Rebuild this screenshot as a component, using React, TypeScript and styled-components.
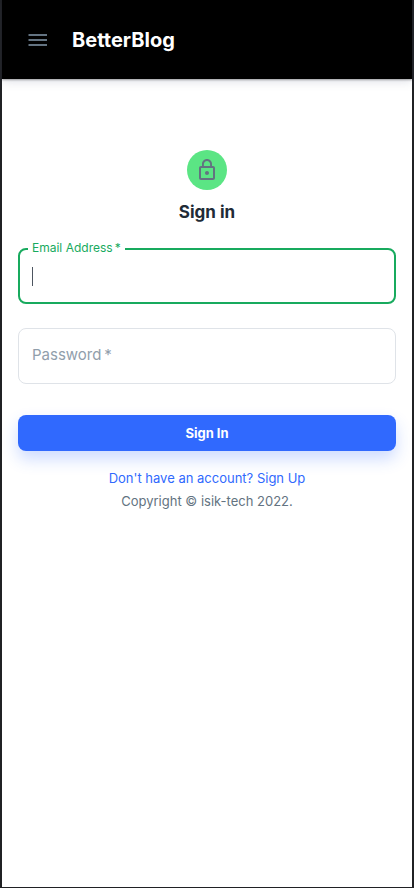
import React, { useState } from "react";
import styled, { createGlobalStyle } from "styled-components";

const GlobalStyle = createGlobalStyle`
  *, *::before, *::after { box-sizing: border-box; }
  body {
    margin: 0;
    background: #202124;
    font-family: Inter, "Open Sans", sans-serif;
    color: #212b36;
  }
`;

const Page = styled.div`
  min-height: 100vh;
  display: flex;
  flex-direction: column;
  background: #ffffff;
  border: solid #202124;
  border-width: 0 2px 1px;
`;

const Header = styled.header`
  display: flex;
  align-items: center;
  gap: 22px;
  height: 79px;
  padding: 0 24px;
  background: #000000;
  box-shadow: 0 1px 2px rgba(0, 0, 0, 0.35), 0 2px 10px rgba(80, 90, 130, 0.2);
`;

const MenuButton = styled.button`
  display: flex;
  padding: 0;
  border: 0;
  background: none;
  color: #637381;
  cursor: pointer;
`;

const Brand = styled.span`
  font-size: 20px;
  line-height: 30px;
  font-weight: 700;
  color: #ffffff;
`;

const Main = styled.main`
  display: flex;
  flex-direction: column;
  align-items: center;
  width: 100%;
  max-width: 444px;
  margin: 0 auto;
  padding: 71px 16px 0;
`;

const Avatar = styled.div`
  display: flex;
  align-items: center;
  justify-content: center;
  width: 40px;
  height: 40px;
  border-radius: 50%;
  background: #5be584;
  color: #637381;
`;

const Title = styled.h1`
  margin: 8px 0 0;
  font-size: 17px;
  line-height: 28px;
  font-weight: 700;
`;

const Form = styled.form`
  display: flex;
  flex-direction: column;
  gap: 24px;
  width: 100%;
  margin-top: 22px;
`;

const Field = styled.div<{ $active?: boolean }>`
  position: relative;
  display: flex;
  height: 56px;
  border-radius: 8px;
  border: ${(p) => (p.$active ? "2px solid #18aa5e" : "1px solid #dfe3e8")};
`;

const Label = styled.label<{ $floating?: boolean }>`
  position: absolute;
  pointer-events: none;
  white-space: nowrap;
  ${(p) =>
    p.$floating
      ? `left: 8px; top: -11px; padding: 0 4px; background: #ffffff;
         font-size: 12px; line-height: 18px; color: #18aa5e;`
      : `left: 13px; top: 14px; font-size: 15px; line-height: 24px; color: #919eab;`}
`;

const Input = styled.input`
  width: 100%;
  padding: 0 14px;
  border: 0;
  border-radius: 8px;
  outline: 0;
  background: transparent;
  font: inherit;
  font-size: 15px;
  color: #212b36;
  caret-color: transparent;
`;

const Caret = styled.span`
  position: absolute;
  left: 12px;
  top: 17px;
  width: 1px;
  height: 19px;
  background: #4d5560;
`;

const SubmitButton = styled.button`
  height: 36px;
  margin-top: 7px;
  border: 0;
  border-radius: 8px;
  background: #3069fe;
  box-shadow: 0 8px 16px rgba(48, 105, 254, 0.24);
  color: #ffffff;
  font: inherit;
  font-size: 13px;
  font-weight: 700;
  cursor: pointer;
`;

const SignUpLink = styled.a`
  margin-top: 16px;
  font-size: 13px;
  line-height: 22px;
  color: #3069fe;
  text-decoration: none;
`;

const Copyright = styled.p`
  margin: 1px 0 0;
  font-size: 13px;
  line-height: 22px;
  color: #637381;
`;

const MenuIcon = () => (
  <svg width="24" height="24" viewBox="0 0 24 24" fill="currentColor" aria-hidden="true">
    <path d="M2.500 6h18.500v2H2.500zM2.500 11h18.500v2H2.500zM2.500 16h18.500v2H2.500z" />
  </svg>
);

const LockIcon = () => (
  <svg width="24" height="24" viewBox="0 0 24 24" fill="currentColor" aria-hidden="true">
    <path d="M12 17c1.1 0 2-.9 2-2s-.9-2-2-2-2 .9-2 2 .9 2 2 2zm6-9h-1V6c0-2.76-2.24-5-5-5S7 3.24 7 6v2H6c-1.1 0-2 .9-2 2v10c0 1.1.9 2 2 2h12c1.1 0 2-.9 2-2V10c0-1.100-.9-2-2-2zM8.900 6c0-1.710 1.390-3.100 3.100-3.100s3.100 1.390 3.100 3.100v2H8.900V6zM18 20H6V10h12v10z" />
  </svg>
);

export default function App() {
  const [email, setEmail] = useState("");
  const [password, setPassword] = useState("");

  return (
    <>
      <GlobalStyle />
      <Page>
        <Header>
          <MenuButton type="button" aria-label="Open menu">
            <MenuIcon />
          </MenuButton>
          <Brand>BetterBlog</Brand>
        </Header>
        <Main>
          <Avatar>
            <LockIcon />
          </Avatar>
          <Title>Sign in</Title>
          <Form onSubmit={(e) => e.preventDefault()}>
            <Field $active>
              <Label htmlFor="email" $floating>
                Email Address&thinsp;*
              </Label>
              <Input
                id="email"
                type="email"
                autoComplete="email"
                required
                autoFocus
                value={email}
                onChange={(e) => setEmail(e.target.value)}
              />
              {email === "" && <Caret />}
            </Field>
            <Field>
              {password === "" ? <Label htmlFor="password">Password&thinsp;*</Label> : null}
              <Input
                id="password"
                type="password"
                autoComplete="current-password"
                aria-label="Password"
                required
                value={password}
                onChange={(e) => setPassword(e.target.value)}
              />
            </Field>
            <SubmitButton type="submit">Sign In</SubmitButton>
          </Form>
          <SignUpLink href="#signup">Don't have an account? Sign Up</SignUpLink>
          <Copyright>Copyright © isik-tech 2022.</Copyright>
        </Main>
      </Page>
    </>
  );
}
